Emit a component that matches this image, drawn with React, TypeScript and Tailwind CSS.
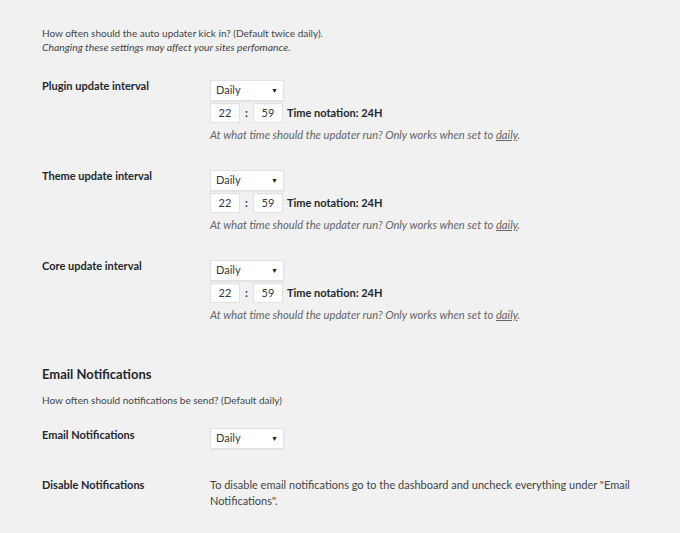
import React from 'react';

const font = { fontFamily: 'Lato, "Open Sans", sans-serif' };

function Select() {
    return (
        <div className="flex h-[21px] w-[74px] items-center justify-between border border-[#e2e2e2] bg-white pl-[5px] pr-[5px] text-[11px] text-[#32373c] shadow-[0_1px_1px_rgba(0,0,0,0.05)]">
            <span>Daily</span>
            <span className="text-[7px] text-[#222]">▼</span>
        </div>
    );
}

function TimeBox({ value }: { value: string }) {
    return (
        <div className="flex h-[20px] w-[30px] items-center justify-center border border-[#e2e2e2] bg-white text-[11px] text-[#32373c] shadow-[inset_0_1px_1px_rgba(0,0,0,0.04)]">
            {value}
        </div>
    );
}

function IntervalRow({ label }: { label: string }) {
    return (
        <div className="flex">
            <div className="w-[168px] shrink-0 text-[11px] font-bold leading-[12px] text-[#23282d]">{label}</div>
            <div>
                <Select />
                <div className="mt-[2px] flex items-center">
                    <TimeBox value="22" />
                    <span className="w-[13px] text-center text-[11px] font-bold text-[#23282d]">:</span>
                    <TimeBox value="59" />
                    <span className="ml-[4px] text-[11px] font-bold text-[#23282d]">Time notation: 24H</span>
                </div>
                <p className="mt-[4px] text-[11.2px] italic leading-4 text-[#666]">
                    At what time should the updater run? Only works when set to <span className="underline">daily</span>.
                </p>
            </div>
        </div>
    );
}

export default function App() {
    return (
        <div className="min-h-[533px] w-[680px] bg-[#f1f1f1] pl-[42px] pt-[26px] text-[#444]" style={font}>
            <p className="text-[10px] leading-[14px]">How often should the auto updater kick in? (Default twice daily).</p>
            <p className="text-[10.4px] italic leading-[14px]">Changing these settings may affect your sites perfomance.</p>

            <div className="mt-[26px] space-y-[27px]">
                <IntervalRow label="Plugin update interval" />
                <IntervalRow label="Theme update interval" />
                <IntervalRow label="Core update interval" />
            </div>

            <h2 className="mt-[41px] text-[13px] font-bold leading-5 text-[#23282d]">Email Notifications</h2>
            <p className="mt-[9px] text-[10px] leading-[14px]">How often should notifications be send? (Default daily)</p>

            <div className="mt-[21px] flex">
                <div className="w-[168px] shrink-0 pt-[1px] text-[11px] font-bold leading-[12px] text-[#23282d]">Email Notifications</div>
                <Select />
            </div>

            <div className="mt-[28px] flex">
                <div className="w-[168px] shrink-0 pt-[2px] text-[11px] font-bold leading-[12px] text-[#23282d]">Disable Notifications</div>
                <p className="w-[420px] text-[11px] leading-4">
                    To disable email notifications go to the dashboard and uncheck everything under "Email Notifications".
                </p>
            </div>
        </div>
    );
}
